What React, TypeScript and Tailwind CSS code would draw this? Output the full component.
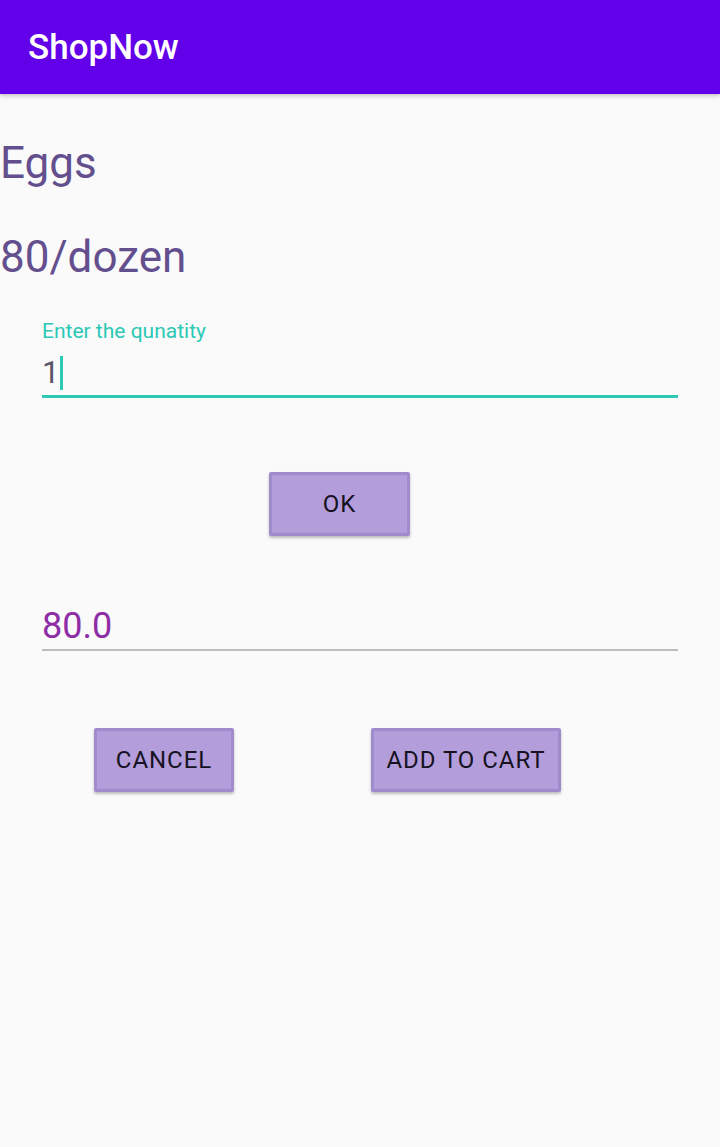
import React from 'react'

const font = { fontFamily: 'Roboto, "Noto Sans", sans-serif' }

const Btn = ({ label, w }: { label: string; w: string }) => (
  <button
    className={`${w} h-[64px] bg-[#b39ddb] border-[3px] border-[#a08bcd] rounded-[2px] shadow-[0_2px_3px_rgba(0,0,0,0.25)] text-[24px] font-normal tracking-[0.04em] text-[#16121f] flex items-center justify-center`}
  >
    {label}
  </button>
)

export default function App() {
  return (
    <div className="min-h-[1147px] w-[720px] bg-[#fafafa]" style={font}>
      <header className="h-[94px] bg-[#6200ea] flex items-center px-[28px] shadow-[0_2px_4px_rgba(0,0,0,0.2)]">
        <h1 className="text-white text-[35px] font-medium leading-none">ShopNow</h1>
      </header>

      <div className="pt-[43px]">
        <p className="text-[44px] leading-[52px] text-[#644f8e]">Eggs</p>
        <p className="mt-[42px] text-[44px] leading-[52px] text-[#644f8e]">80/dozen</p>
      </div>

      {/* quantity input */}
      <div className="px-[42px] mt-[36px]">
        <label className="block text-[21px] leading-[24px] text-[#2bc9b6]">Enter the qunatity</label>
        <div className="mt-[10px] h-[45px] flex items-center border-b-[3px] border-[#2bc9b6]">
          <span className="text-[31px] leading-none text-[#5a5468] -mt-[3px]">1</span>
          <span className="w-[3px] h-[34px] bg-[#2bc9b6] ml-[1px] -mt-[3px]" />
        </div>
      </div>

      <div className="flex mt-[74px] pl-[269px]">
        <Btn label="OK" w="w-[141px]" />
      </div>

      <div className="px-[42px] mt-[68px]">
        <div className="h-[47px] border-b-2 border-[#bdbdbd] flex items-start">
          <span className="text-[36px] leading-[40px] text-[#8e2da6] mt-[2px]">80.0</span>
        </div>
      </div>

      <div className="flex mt-[77px] pl-[94px] gap-[137px]">
        <Btn label="CANCEL" w="w-[140px]" />
        <Btn label="ADD TO CART" w="w-[190px]" />
      </div>
    </div>
  )
}
